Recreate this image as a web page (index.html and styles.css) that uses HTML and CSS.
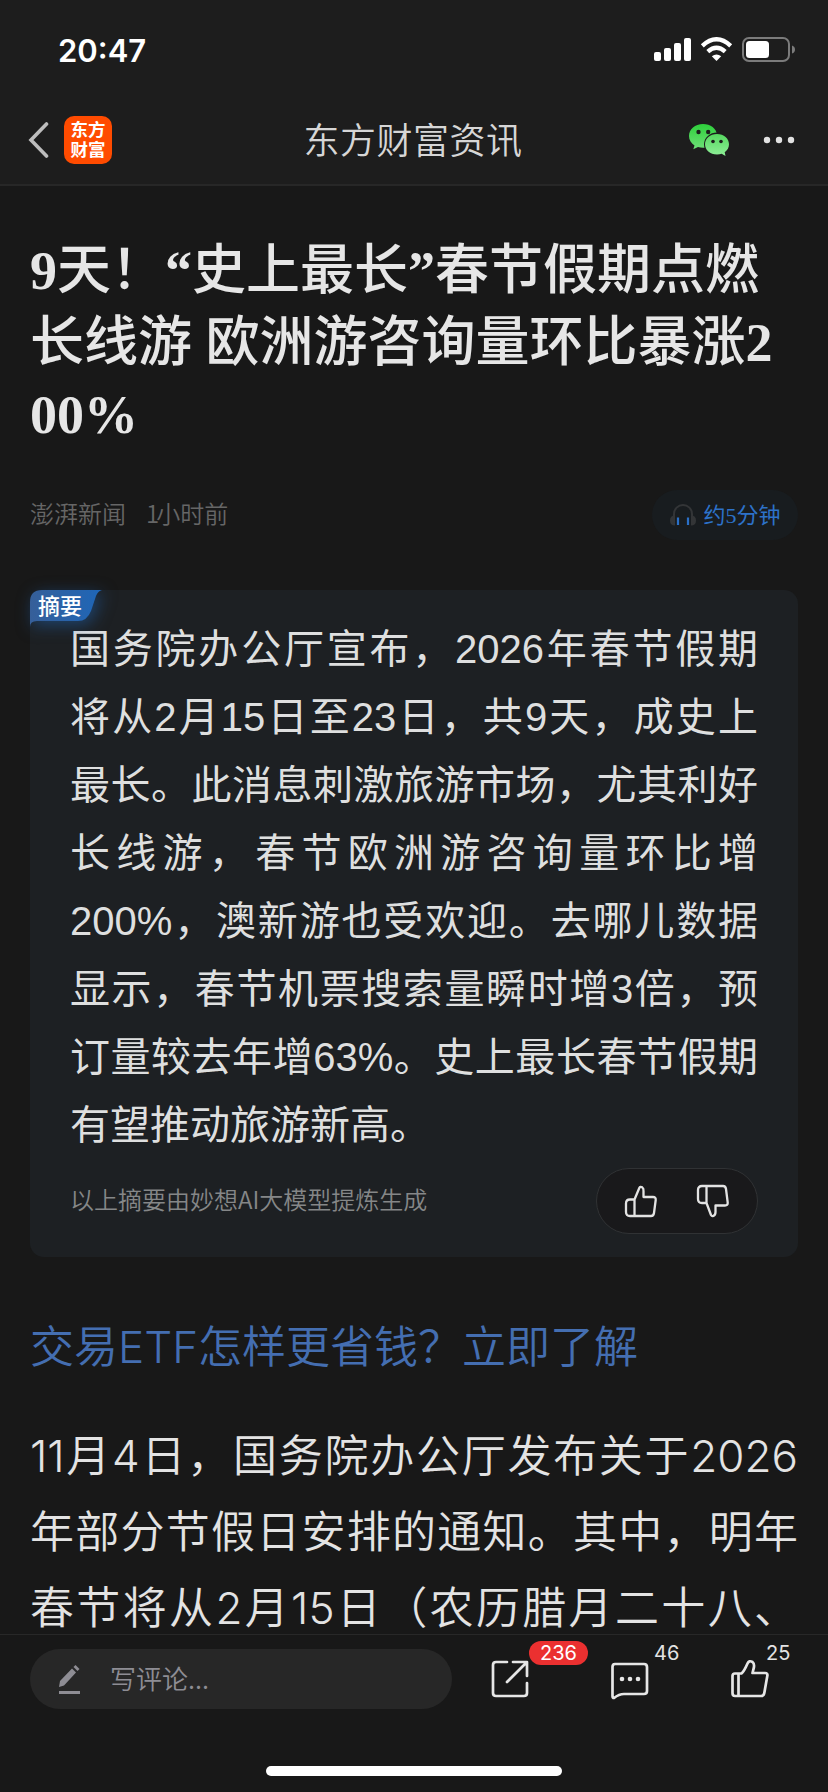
FILE: index.html
```html
<!DOCTYPE html>
<html lang="zh-CN">
<head>
  <meta charset="UTF-8">
  <title>东方财富资讯</title>
  <link rel="stylesheet" href="styles.css">
</head>
<body>
  <!-- 顶部：状态栏 + 导航栏 -->
  <header class="header">
    <div class="status-bar">
      <span class="time">20:47</span>
      <svg class="status-icons" width="142" height="26" viewBox="0 0 142 26">
        <g fill="#fff">
          <rect x="0" y="15" width="7" height="9" rx="2"/>
          <rect x="10" y="11" width="7" height="13" rx="2"/>
          <rect x="20" y="6" width="7" height="18" rx="2"/>
          <rect x="30" y="1" width="7" height="23" rx="2"/>
          <path d="M62.5 24L57.8 19.2Q62.500 15.600 67.200 19.200Z"/>
        </g>
        <g fill="none" stroke="#fff" stroke-width="4.300">
          <path d="M48.300 8.800Q62.500 -4.300 76.700 8.800"/>
          <path d="M53.800 14.700Q62.500 7 71.200 14.700"/>
        </g>
        <rect x="89" y="1" width="46" height="23" rx="6" fill="none" stroke="#7b7b7b" stroke-width="2"/>
        <rect x="92" y="4" width="23" height="17" rx="3.500" fill="#fff"/>
        <path d="M138 8.500Q141 9.500 141 12.500T138 16.500Z" fill="#7b7b7b"/>
      </svg>
    </div>
    <nav class="nav-bar">
      <svg class="back" width="22" height="36" viewBox="0 0 22 36">
        <path d="M18.500 2L3 18L18.500 34" fill="none" stroke="#bdbdbd" stroke-width="3.600" stroke-linecap="round"/>
      </svg>
      <div class="logo">东方<br>财富</div>
      <h2 class="nav-title">东方财富资讯</h2>
      <svg class="wechat" width="42" height="34" viewBox="0 0 42 34">
        <defs>
          <linearGradient id="green1" x1="0" y1="0" x2="0" y2="1">
            <stop offset="0" stop-color="#2dcf3a"/>
            <stop offset="1" stop-color="#6fe078"/>
          </linearGradient>
          <linearGradient id="green2" x1="0" y1="0" x2="0" y2="1">
            <stop offset="0" stop-color="#55d75f"/>
            <stop offset="1" stop-color="#8fee98"/>
          </linearGradient>
        </defs>
        <path d="M15 1C7 1 1 6.200 1 13C1 17 3 20.200 6.500 22.400L5.300 26.200L10 24Q13.500 25.200 18 24.600C26 23 29.500 18 29 12C28.500 5.500 22.500 1 15 1Z" fill="url(#green1)"/>
        <ellipse cx="29" cy="21.300" rx="13" ry="11.800" fill="#1d1d1d"/>
        <path d="M29 11C22 11 17 15.500 17 21.300C17 27 22 31.500 29 31.500Q31.500 31.500 33.700 30.700L37.500 33L36.700 29.200C39.500 27.200 41 24.500 41 21.300C41 15.500 36 11 29 11Z" fill="url(#green2)"/>
        <g fill="#1d1d1d">
          <circle cx="10.500" cy="9" r="2.200"/>
          <circle cx="20.200" cy="9" r="2.200"/>
          <circle cx="25" cy="18.500" r="1.800"/>
          <circle cx="33" cy="18.500" r="1.800"/>
        </g>
      </svg>
      <svg class="more" width="32" height="8" viewBox="0 0 32 8" fill="#e2e2e2">
        <circle cx="4" cy="4" r="3.200"/>
        <circle cx="16" cy="4" r="3.200"/>
        <circle cx="28" cy="4" r="3.200"/>
      </svg>
    </nav>
  </header>

  <!-- 正文 -->
  <main class="article">
    <h1 class="title"><b>9</b>天！<b>“</b>史上最长<b>”</b>春节假期点燃<br>长线游 欧洲游咨询量环比暴涨<b>2</b><br><b>00%</b></h1>

    <div class="meta">
      <span class="source">澎湃新闻</span>
      <span class="date"><span class="num">1</span>小时前</span>
      <div class="listen">
        <svg width="28" height="24" viewBox="0 0 28 24">
          <path d="M5 14V11A9 9 0 0 1 23 11V14" fill="none" stroke="#333537" stroke-width="2"/>
          <path d="M6 12.500V22.500Q1 22.500 1 17.500T6 12.500ZM22 12.500V22.500Q27 22.500 27 17.500T22 12.500Z" fill="#333537"/>
          <path d="M9 14.500V22M19 14.500V22" stroke="#2a70c8" stroke-width="2.200"/>
        </svg>
        <span>约5分钟</span>
      </div>
    </div>

    <section class="summary">
      <div class="tag">
        <svg class="tag-bg" width="72" height="40" viewBox="0 0 72 40">
          <defs>
            <linearGradient id="tagBlue" x1="0" y1="0" x2="1" y2="0">
              <stop offset="0" stop-color="#365f99"/>
              <stop offset="1" stop-color="#1e66b8"/>
            </linearGradient>
          </defs>
          <path d="M0 37V12Q0 0 12 0H72Q68 1 66 6L61 21Q57 31 48 31H7Q0 31 0 37Z" fill="url(#tagBlue)"/>
        </svg>
        <span>摘要</span>
      </div>
      <p class="summary-text">
        <span>国务院办公厅宣布，2026年春节假期</span>
        <span>将从2月15日至23日，共9天，成史上</span>
        <span>最长。此消息刺激旅游市场，尤其利好</span>
        <span>长线游，春节欧洲游咨询量环比增</span>
        <span>200%，澳新游也受欢迎。去哪儿数据</span>
        <span>显示，春节机票搜索量瞬时增3倍，预</span>
        <span>订量较去年增63%。史上最长春节假期</span>
        <span class="last">有望推动旅游新高。</span>
      </p>
      <div class="summary-foot">
        <span class="source-note">以上摘要由妙想AI大模型提炼生成</span>
        <div class="feedback">
          <svg width="32" height="32" viewBox="0 0 32 32">
            <path d="M9.500 14.500L14.300 3Q15.200 1 17.200 2.300Q18.800 3.500 18.500 6V12H28Q31 12 30.700 15L29 28Q28.600 31 26 31H5Q1 31 1 27V18.500Q1 14.500 5 14.500ZM9.500 14.500V31"/>
          </svg>
          <svg width="32" height="32" viewBox="0 0 32 32">
            <path d="M9.500 18L14 30Q14.800 31.500 16.300 31Q18.500 30 18.500 27V20.500H28Q31 20.500 30.700 17.500L29 4Q28.600 1 26 1H5Q1 1 1 5V14Q1 18 5 18ZM9.500 18V1"/>
          </svg>
        </div>
      </div>
    </section>

    <a class="promo">交易ETF怎样更省钱？立即了解</a>

    <p class="content">
      <span>11月4日，国务院办公厅发布关于2026</span>
      <span>年部分节假日安排的通知。其中，明年</span>
      <span>春节将从2月15日（农历腊月二十八、</span>
    </p>
  </main>

  <!-- 底部评论栏 -->
  <footer class="toolbar">
    <div class="comment-input">
      <svg width="24" height="32" viewBox="0 0 24 32" fill="#8e8d94">
        <path d="M1 24L2 18L14 5.500L18 9.500L6 22.500ZM15.500 4L17.500 2L21.500 6L19.500 8Z"/>
        <rect x="1" y="28" width="21" height="3"/>
      </svg>
      <span>写评论...</span>
    </div>
    <div class="action share">
      <svg width="40" height="40" viewBox="0 0 40 40">
        <path d="M17 3H6Q3 3 3 6V34Q3 37 6 37H34Q37 37 37 34V24M23 3H37V17M36 4L17 23"/>
      </svg>
      <span class="badge">236</span>
    </div>
    <div class="action reply">
      <svg width="40" height="40" viewBox="0 0 40 40">
        <path d="M5 3H34Q37 3 37 6V30Q37 33 34 33H14Q9 33 4 37Q2.500 37 2.500 35V6Q2.500 3 5 3Z"/>
        <g class="dots"><circle cx="12" cy="18" r="2.300"/><circle cx="20" cy="18" r="2.300"/><circle cx="28" cy="18" r="2.300"/></g>
      </svg>
      <span class="count">46</span>
    </div>
    <div class="action like">
      <svg width="40" height="40" viewBox="0 0 40 40">
        <path d="M11.500 14.500Q14 12.500 17.500 4.500Q19 1 22.500 3Q25 5 23.500 10L22.500 14H35Q38 14 37.300 17L34.300 34Q33.800 37 31 37H5Q2.500 37 2.500 34V17Q2.500 14.500 5 14.500ZM8.500 14.500V37"/>
      </svg>
      <span class="count">25</span>
    </div>
    <div class="home-indicator"></div>
  </footer>
</body>
</html>
```
FILE: styles.css
```css
* { box-sizing: border-box; margin: 0; padding: 0; }

body {
  width: 828px;
  height: 1792px;
  overflow: hidden;
  display: flex;
  flex-direction: column;
  background: #181818;
  color: #e3e3e3;
  font-family: "Noto Sans CJK SC", sans-serif;
  font-weight: 350;
}

svg { display: block; flex: none; }

/* 顶部 */
.header {
  flex: none;
  height: 186px;
  background: #1d1d1d;
  border-bottom: 2px solid #272727;
}

.status-bar {
  height: 96px;
  padding: 4px 32px 0 58px;
  display: flex;
  align-items: center;
  justify-content: space-between;
}

.time {
  font: 600 31px Inter, sans-serif;
  color: #fff;
}

.nav-bar {
  height: 88px;
  padding: 0 33px 0 28px;
  display: flex;
  align-items: center;
}

.logo {
  width: 48px;
  height: 48px;
  padding-top: 3px;
  margin-left: 14px;
  border-radius: 10px;
  background: #ff4b00;
  color: #fff;
  text-align: center;
  font-size: 17.500px;
  font-weight: 700;
  line-height: 20px;
}

.nav-title {
  flex: 1;
  padding: 0 0 4px 26px;
  text-align: center;
  font-size: 36px;
  font-weight: 350;
  letter-spacing: 0.500px;
  color: #d6d6d6;
}

.more { margin-left: 33px; }

/* 正文 */
.article {
  flex: 1;
  min-height: 0;
  overflow: hidden;
  padding: 49px 30px 0;
}

.title {
  font-family: "Liberation Serif", "Noto Sans CJK SC", serif;
  font-size: 54px;
  font-weight: 500;
  line-height: 72px;
  color: #e6e6e6;
  white-space: nowrap;
}

.title b { font-weight: 700; }

.meta {
  height: 50px;
  margin-top: 39px;
  display: flex;
  align-items: center;
  gap: 20px;
  font-size: 24px;
  color: #666;
}

.source,
.date { padding-bottom: 5px; }

.date .num { margin-right: -3px; }

.listen {
  width: 146px;
  height: 50px;
  margin-left: auto;
  border-radius: 25px;
  background: #181c1f;
  display: flex;
  align-items: center;
  justify-content: center;
  gap: 6px;
  color: #2d72c9;
  font-family: "Liberation Serif", "Noto Sans CJK SC", serif;
  font-size: 22px;
  font-weight: 400;
}

.listen span { padding-bottom: 5px; }

/* 摘要卡片 */
.summary {
  position: relative;
  height: 667px;
  margin-top: 50px;
  padding: 25px 40px 0;
  border-radius: 14px;
  background: #1d2023;
}

.tag {
  position: absolute;
  left: 0;
  top: 0;
  width: 72px;
  height: 31px;
  padding-left: 8px;
  font-size: 22px;
  font-weight: 500;
  line-height: 29px;
  color: #fff;
}

.tag-bg {
  position: absolute;
  left: 0;
  top: 0;
  filter: drop-shadow(3px 4px 8px rgba(30, 102, 184, 0.5));
}

.tag span { position: relative; }

.summary-text {
  font-family: "Liberation Sans", "Noto Sans CJK SC", sans-serif;
  font-size: 40px;
  font-weight: 400;
  line-height: 68px;
  color: #dedfdf;
}

.summary-text span,
.content span {
  display: block;
  white-space: nowrap;
  text-align: justify;
  text-align-last: justify;
}

.summary-text .last { text-align-last: left; }

.summary-foot {
  margin-top: 9px;
  display: flex;
  align-items: center;
  justify-content: space-between;
  font-size: 24px;
  color: #858788;
}

.source-note { padding-bottom: 5px; }

.feedback {
  width: 162px;
  height: 66px;
  border: 1px solid #303234;
  border-radius: 33px;
  background: #19191b;
  display: flex;
  align-items: center;
  justify-content: center;
  gap: 40px;
}

.feedback svg {
  overflow: visible;
  fill: none;
  stroke: #e3e3e3;
  stroke-width: 2.300;
  stroke-linejoin: round;
}

.promo {
  display: block;
  margin-top: 52px;
  font-family: Inter, "Noto Sans CJK SC", sans-serif;
  font-size: 44px;
  line-height: 76px;
  color: #446eb1;
}

.content {
  margin-top: 33px;
  font-family: Inter, "Noto Sans CJK SC", sans-serif;
  font-size: 44px;
  line-height: 76px;
}

/* 底部栏 */
.toolbar {
  position: relative;
  flex: none;
  height: 158px;
  padding: 14px 30px 0;
  border-top: 1px solid #282828;
  background: #181818;
  display: flex;
  align-items: flex-start;
}

.comment-input {
  width: 422px;
  height: 60px;
  padding-left: 28px;
  border-radius: 30px;
  background: #272727;
  display: flex;
  align-items: center;
  gap: 28px;
  font-size: 26px;
  color: #8e8d94;
}

.comment-input span { padding-bottom: 4px; }

.action {
  position: relative;
  width: 40px;
  margin-top: 10px;
}

.action svg {
  fill: none;
  stroke: #e6e6e6;
  stroke-width: 2.700;
  stroke-linejoin: round;
  stroke-linecap: round;
}

.action .dots { fill: #e6e6e6; stroke: none; }

.share { margin-left: 38px; }
.reply { margin-left: 80px; margin-top: 12px; }
.like { margin-left: 80px; }

.count,
.badge {
  position: absolute;
  font: 400 20px/24px Inter, sans-serif;
}

.badge {
  left: 39px;
  top: -18px;
  width: 59px;
  border-radius: 12px;
  background: #eb3030;
  color: #fff;
  text-align: center;
}

.reply .count { left: 44px; top: -20px; }
.like .count { left: 36px; top: -18px; }

.home-indicator {
  position: absolute;
  left: 266px;
  bottom: 16px;
  width: 296px;
  height: 10px;
  border-radius: 5px;
  background: #fff;
}
```
